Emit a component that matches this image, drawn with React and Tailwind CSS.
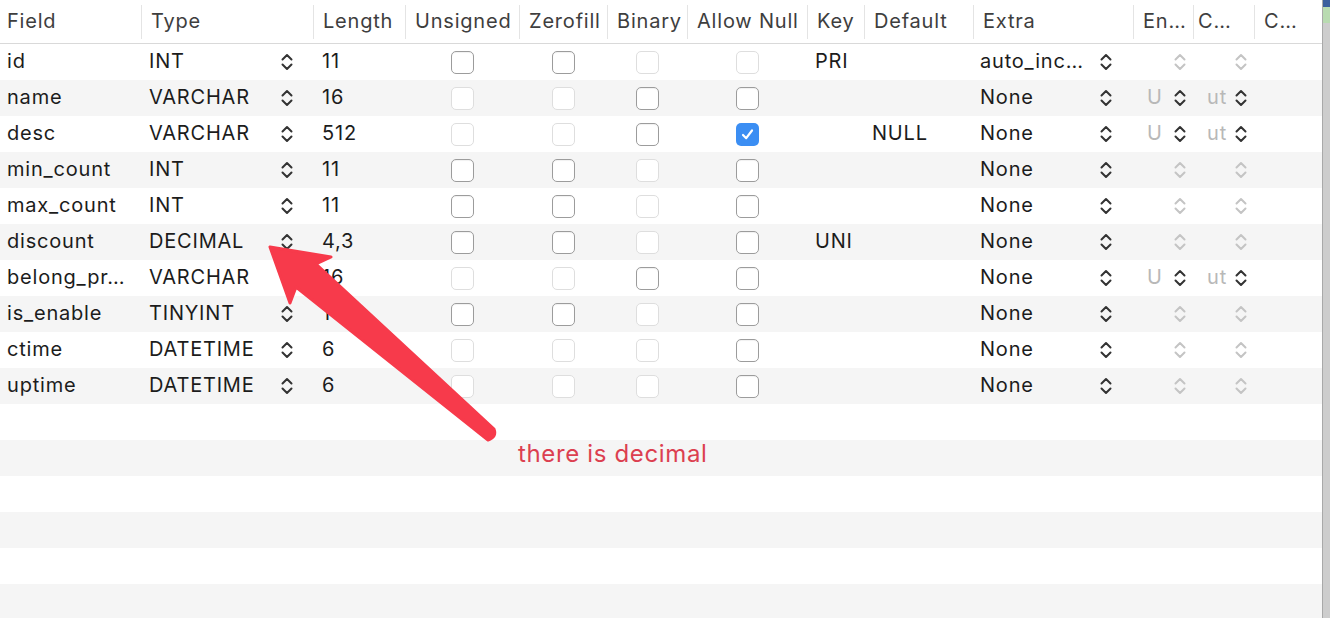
import React from 'react';

const cols = 'grid-cols-[141px_172px_92px_114px_88px_80px_120px_57px_109px_160px_60px_61px_68px]';

const headers = ['Field', 'Type', 'Length', 'Unsigned', 'Zerofill', 'Binary', 'Allow Null', 'Key', 'Default', 'Extra', 'En…', 'C…', 'C…'];

const rows = [
  { field: 'id', type: 'INT', len: '11', cb: ['on', 'on', 'off', 'off'], key: 'PRI', extra: 'auto_inc…' },
  { field: 'name', type: 'VARCHAR', len: '16', cb: ['off', 'off', 'on', 'on'], extra: 'None', enc: true },
  { field: 'desc', type: 'VARCHAR', len: '512', cb: ['off', 'off', 'on', 'checked'], def: 'NULL', extra: 'None', enc: true },
  { field: 'min_count', type: 'INT', len: '11', cb: ['on', 'on', 'off', 'on'], extra: 'None' },
  { field: 'max_count', type: 'INT', len: '11', cb: ['on', 'on', 'off', 'on'], extra: 'None' },
  { field: 'discount', type: 'DECIMAL', len: '4,3', cb: ['on', 'on', 'off', 'on'], key: 'UNI', extra: 'None' },
  { field: 'belong_pr…', type: 'VARCHAR', len: '16', cb: ['off', 'off', 'on', 'on'], extra: 'None', enc: true },
  { field: 'is_enable', type: 'TINYINT', len: '1', cb: ['on', 'on', 'off', 'on'], extra: 'None' },
  { field: 'ctime', type: 'DATETIME', len: '6', cb: ['off', 'off', 'off', 'on'], extra: 'None' },
  { field: 'uptime', type: 'DATETIME', len: '6', cb: ['off', 'off', 'off', 'on'], extra: 'None' },
];

function Stepper({ light }) {
  return (
    <svg width="14" height="20" viewBox="0 0 14 20" className="shrink-0">
      <g fill="none" stroke={light ? '#c4c4c4' : '#333'} strokeWidth="2" strokeLinecap="round" strokeLinejoin="round">
        <path d="M2.5 7.5 L7 3 L11.5 7.5" />
        <path d="M2.5 12.5 L7 17 L11.5 12.5" />
      </g>
    </svg>
  );
}

function Checkbox({ state }) {
  if (state === 'checked') {
    return (
      <div className="flex h-[23px] w-[23px] items-center justify-center rounded-[5px] bg-[#3b8ef3]">
        <svg width="15" height="15" viewBox="0 0 15 15">
          <path d="M3 8 L6.2 11.2 L12 3.5" fill="none" stroke="#fff" strokeWidth="2.2" strokeLinecap="round" strokeLinejoin="round" />
        </svg>
      </div>
    );
  }
  return (
    <div
      className={`h-[23px] w-[23px] rounded-[5px] border bg-white ${
        state === 'on' ? 'border-[#9c9c9c] shadow-[inset_0_1px_1px_rgba(0,0,0,0.06)]' : 'border-[#dedede]'
      }`}
    />
  );
}

function Row({ row, gray }) {
  return (
    <div className={`grid h-9 ${cols} items-center ${gray ? 'bg-[#f5f5f5]' : 'bg-white'}`}>
      {row && (
        <>
          <div className="pb-[3px] pl-[7px]">{row.field}</div>
          <div className="flex items-center justify-between pl-2 pr-[19px]">
            <span className="pb-[3px]">{row.type}</span>
            <Stepper />
          </div>
          <div className="pb-[3px] pl-[9px]">{row.len}</div>
          {row.cb.map((c, i) => (
            <div key={i} className="flex justify-center">
              <Checkbox state={c} />
            </div>
          ))}
          <div className="pb-[3px] pl-2">{row.key}</div>
          <div className="pb-[3px] pl-2">{row.def}</div>
          <div className="flex items-center justify-between pl-[7px] pr-[20px]">
            <span className="pb-[3px]">{row.extra}</span>
            <Stepper />
          </div>
          <div className="flex items-center justify-between pl-[14px] pr-[6px]">
            <span className="pb-[3px] text-[#b8b8b8]">{row.enc ? 'U' : ''}</span>
            <Stepper light={!row.enc} />
          </div>
          <div className="flex items-center justify-between pl-[14px] pr-[6px]">
            <span className="pb-[3px] text-[#b8b8b8]">{row.enc ? 'ut' : ''}</span>
            <Stepper light={!row.enc} />
          </div>
          <div />
        </>
      )}
    </div>
  );
}

export default function App() {
  return (
    <div className="relative flex h-[618px] w-[1330px] overflow-hidden bg-white font-['Inter','Liberation_Sans',sans-serif] text-[20px] tracking-[0.8px] text-[#1c1c1c]">
      <div className="w-[1322px] shrink-0">
        <div className={`grid h-11 ${cols} items-center border-b border-[#d9d9d9] text-[#3e3e3e]`}>
          {headers.map((h, i) => (
            <div key={i} className="flex h-[34px] items-center">
              {i > 0 && <div className="h-full w-px bg-[#e4e4e4]" />}
              <span className={`pb-[2px] ${i === 0 ? 'pl-[7px]' : i === 11 ? 'pl-1' : 'pl-[9px]'}`}>{h}</span>
            </div>
          ))}
        </div>
        {rows.map((r, i) => (
          <Row key={r.field} row={r} gray={i % 2 === 1} />
        ))}
        {[0, 1, 2, 3, 4, 5].map((i) => (
          <Row key={'e' + i} gray={i % 2 === 1} />
        ))}
      </div>
      <div className="flex w-2 flex-col border-l border-[#a9a9a9] bg-[#cdcdcd]">
        <div className="h-[7px] bg-[#3c5f9e]" />
        <div className="h-4 bg-[#b9dbb1]" />
      </div>

      <svg className="pointer-events-none absolute left-0 top-0" width="1330" height="618">
        <path
          d="M270 247 L331 257 L316 264 L494 429 Q497 437 488 440 L296 287 L290 303 Z"
          fill="#f73a4b"
          stroke="#f73a4b"
          strokeWidth="3"
          strokeLinejoin="round"
        />
      </svg>
      <div className="absolute left-[518px] top-[436px] text-[24px] tracking-[0.65px] text-[#dc3f50]">there is decimal</div>
    </div>
  );
}
